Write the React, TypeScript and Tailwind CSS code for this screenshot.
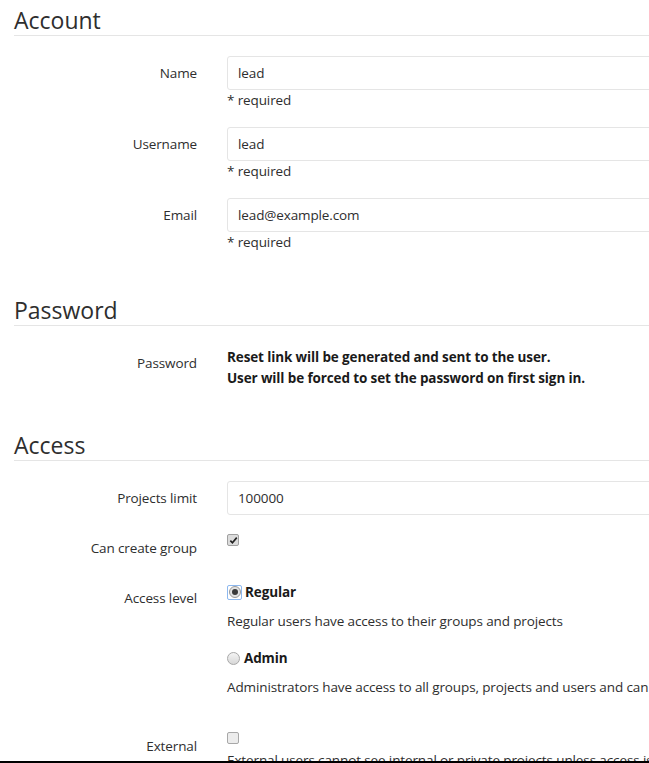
import React from "react";

const font = "font-['Open_Sans','Noto_Sans',sans-serif]";

const Label = ({ children }: { children: React.ReactNode }) => (
  <div className="w-[183px] shrink-0 pt-[7px] text-right leading-[20px] text-[#2e2e2e]">
    {children}
  </div>
);

const TextField = ({ value }: { value: string }) => (
  <div className="flex h-[34px] items-center rounded-[3px] border border-[#e5e5e5] bg-white px-[10px] text-[#2e2e2e]">
    {value}
  </div>
);

const SectionTitle = ({ title, className }: { title: string; className: string }) => (
  <h3
    className={`border-b border-[#e5e5e5] text-[23px] leading-[30px] font-normal tracking-normal text-[#2e2e2e] ${className}`}
  >
    {title}
  </h3>
);

const CheckBox = ({ checked }: { checked?: boolean }) => (
  <div
    className={`flex h-[12px] w-[12px] items-center justify-center rounded-[2px] border ${
      checked ? "border-[#a0a0a0] bg-[#dcdcdc]" : "border-[#a8a8a8] bg-[#ececec]"
    }`}
  >
    {checked && (
      <svg viewBox="0 0 10 10" className="h-[9px] w-[9px]">
        <path d="M1.5 5.2 L3.8 7.6 L8.6 1.8" fill="none" stroke="#222" strokeWidth="1.8" />
      </svg>
    )}
  </div>
);

const Radio = ({ checked }: { checked?: boolean }) =>
  checked ? (
    <div className="flex h-[15px] w-[15px] items-center justify-center rounded-[2px] border border-[#8db8ef]">
      <div className="flex h-[12px] w-[12px] items-center justify-center rounded-full border border-[#9a9a9a] bg-[#e3e3e3]">
        <div className="h-[6px] w-[6px] rounded-full bg-[#3a3a3a]" />
      </div>
    </div>
  ) : (
    <div className="h-[13px] w-[13px] rounded-full border border-[#a8a8a8] bg-gradient-to-b from-[#f4f4f4] to-[#d8d8d8]" />
  );

const Field = ({ label, value }: { label: string; value: string }) => (
  <div className="mb-[17px] flex gap-[30px]">
    <Label>{label}</Label>
    <div className="flex-1">
      <TextField value={value} />
      <div className="leading-[20px] text-[#2e2e2e]">* required</div>
    </div>
  </div>
);

export default function App() {
  return (
    <div
      className={`relative h-[763px] w-[649px] overflow-hidden border-b-2 border-black bg-white text-[13.5px] tracking-[-0.12px] ${font}`}
    >
      <div className="w-[1000px] pt-[5px] pl-[14px]">
        {/* Account */}
        <SectionTitle title="Account" className="mb-[20px]" />
        <Field label="Name" value="lead" />
        <Field label="Username" value="lead" />
        <Field label="Email" value="lead@example.com" />

        {/* Password */}
        <SectionTitle title="Password" className="mt-[43px] mb-[20px]" />
        <div className="flex gap-[30px]">
          <Label>Password</Label>
          <div className="pt-[1px] font-bold leading-[21px] text-[#1a1a1a]">
            <div>Reset link will be generated and sent to the user.</div>
            <div>User will be forced to set the password on first sign in.</div>
          </div>
        </div>

        {/* Access */}
        <SectionTitle title="Access" className="mt-[41px] mb-[20px]" />
        <div className="mb-[16px] flex gap-[30px]">
          <Label>Projects limit</Label>
          <div className="flex-1">
            <TextField value="100000" />
          </div>
        </div>

        <div className="mb-[23px] flex gap-[30px]">
          <Label>Can create group</Label>
          <div className="pt-[3px]">
            <CheckBox checked />
          </div>
        </div>

        <div className="mb-[32px] flex gap-[30px]">
          <Label>Access level</Label>
          <div className="flex-1 pt-[1px] leading-[20px] text-[#2e2e2e]">
            <div className="flex items-center gap-[3px] font-bold text-[#1a1a1a]">
              <Radio checked />
              <span>Regular</span>
            </div>
            <div className="mt-[9px]">Regular users have access to their groups and projects</div>
            <div className="mt-[17px] flex items-center gap-[4px] font-bold text-[#1a1a1a]">
              <Radio />
              <span>Admin</span>
            </div>
            <div className="mt-[9px] whitespace-nowrap">
              Administrators have access to all groups, projects and users and can manage all features in this installation
            </div>
          </div>
        </div>

        <div className="flex gap-[30px]">
          <Label>External</Label>
          <div className="flex-1 pt-[3px] leading-[20px] text-[#2e2e2e]">
            <CheckBox />
            <div className="mt-[6px] whitespace-nowrap">
              External users cannot see internal or private projects unless access is explicitly granted. Also, external users cannot create projects or groups.
            </div>
          </div>
        </div>
      </div>
    </div>
  );
}
